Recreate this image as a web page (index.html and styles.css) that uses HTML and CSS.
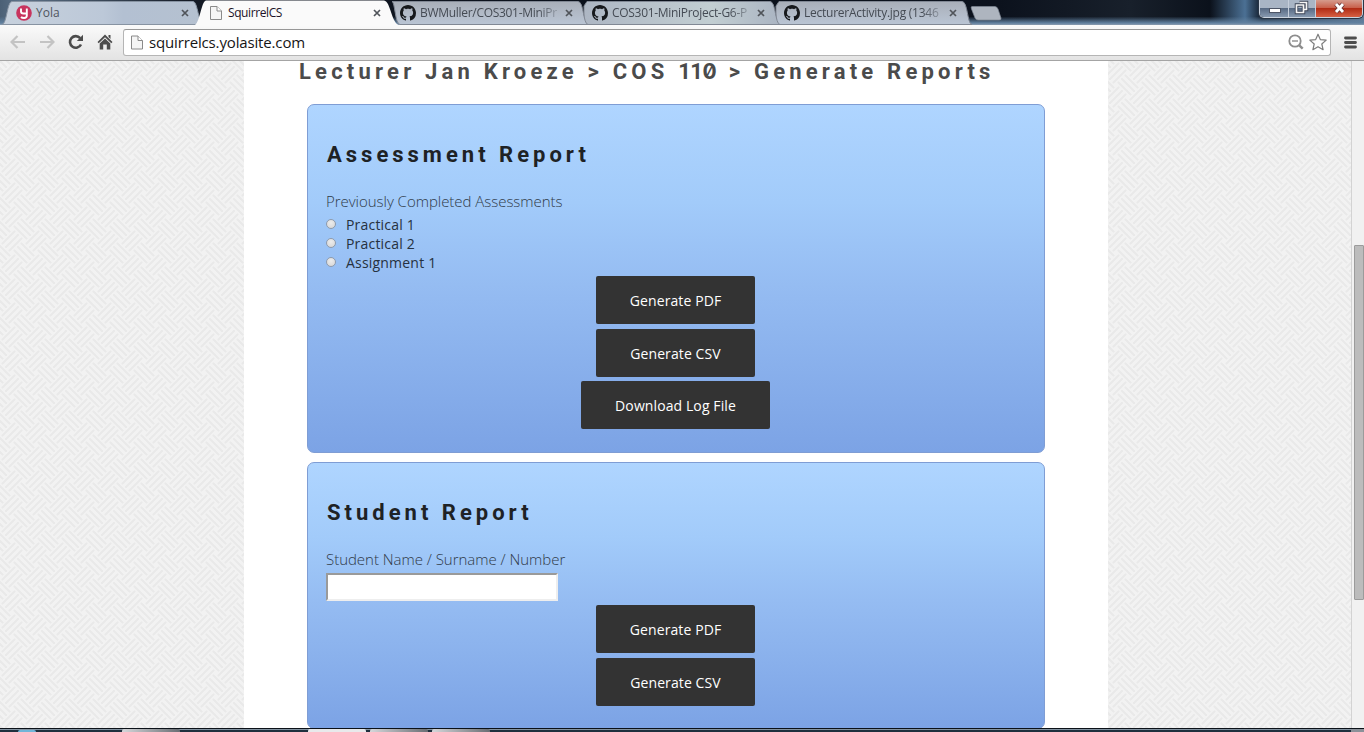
FILE: index.html
```html
<!DOCTYPE html>
<html lang="en">
<head>
<meta charset="utf-8">
<title>SquirrelCS</title>
<link rel="stylesheet" href="styles.css">
</head>
<body>
<svg class="defs" width="0" height="0" aria-hidden="true">
  <defs>
    <linearGradient id="glass" x1="0" y1="0" x2="0" y2="1"><stop offset="0" stop-color="#a9afb9"/><stop offset="1" stop-color="#bac5d4"/></linearGradient>
    <linearGradient id="glassLight" x1="0" y1="0" x2="1" y2="0"><stop offset="0" stop-color="#c7d1dd"/><stop offset=".5" stop-color="#bcc8d8"/><stop offset=".6" stop-color="#b3c0d2"/><stop offset="1" stop-color="#b5c1d0"/></linearGradient>
    <linearGradient id="glow" x1="0" y1="0" x2="1" y2="0"><stop offset="0" stop-color="#adb6c3"/><stop offset=".65" stop-color="#c2ced2"/><stop offset="1" stop-color="#aab4c2"/></linearGradient>
    <symbol id="page" viewBox="0 0 12 14"><path d="M.5 .5H7L11.5 5V13.5H.5Z" fill="#f5f5f5" stroke="#8a8a8a"/><path d="M7 .5V5H11.5" fill="#fff" stroke="#8a8a8a"/></symbol>
    <symbol id="github" viewBox="0 0 16 16"><path fill="#17191c" d="M8 0C3.58 0 0 3.58 0 8c0 3.54 2.29 6.53 5.47 7.59.4.07.55-.17.55-.38 0-.19-.01-.82-.01-1.49-2.01.37-2.53-.49-2.69-.94-.09-.23-.48-.94-.82-1.13-.28-.15-.68-.52-.01-.53.63-.01 1.08.58 1.23.82.72 1.21 1.87.87 2.33.66.07-.52.28-.87.51-1.07-1.78-.2-3.64-.89-3.64-3.95 0-.87.31-1.59.82-2.15-.08-.2-.36-1.02.08-2.12 0 0 .67-.21 2.2.82.64-.18 1.32-.27 2-.27s1.36.09 2 .27c1.53-1.04 2.2-.82 2.2-.82.44 1.1.16 1.92.08 2.12.51.56.82 1.27.82 2.15 0 3.07-1.87 3.75-3.65 3.95.29.25.54.73.54 1.48 0 1.07-.01 1.93-.01 2.2 0 .21.15.46.55.38A8.01 8.01 0 0 0 16 8c0-4.42-3.58-8-8-8Z"/></symbol>
    <symbol id="close" viewBox="0 0 8 8"><path d="M1 1L7 7M7 1L1 7" stroke="#50545a" stroke-width="1.7"/></symbol>
  </defs>
</svg>
<div class="window">
  <header class="titlebar">
    <div class="tabs">
      <div class="tab tab-1">
        <svg class="shape" width="204" height="25"><path d="M-1 24.5C4 24 4 1.5 9 1.5H190C195 1.5 195 24 201 24.5Z" fill="url(#glassLight)" stroke="#8793a2"/></svg>
        <svg class="fav" width="16" height="16" viewBox="0 0 16 16"><circle cx="8" cy="8" r="7.8" fill="#c8345e"/><path d="M5 3.5V6.500Q5 8.500 7.500 8.500H10.500M10.800 3.500V10.500Q10.800 13 8 13Q6 13 5 12" fill="none" stroke="#fff" stroke-width="1.900"/></svg>
        <span class="label label-yola">Yola</span><svg class="x" width="8" height="8"><use href="#close"/></svg>
      </div>
      <div class="tab active">
        <svg class="shape" width="208" height="26"><path d="M-1 25.5C5 24 6 1.5 11 .5H189C196 1.5 196 24 205 25.5V26H-1Z" fill="#fafafa" stroke="none"/></svg>
        <svg class="fav" width="16" height="14"><use href="#page" width="12" height="14" x="2"/></svg>
        <span class="label label-squirrel">SquirrelCS</span><svg class="x" width="8" height="8"><use href="#close"/></svg>
      </div>
      <div class="tab tab-3">
        <svg class="shape" width="204" height="25"><path d="M5 1.5H191C197 1.5 196 24 201 24.5H13C8 24 8 1.5 5 1.5Z" fill="url(#glass)" stroke="#818894"/></svg>
        <svg class="fav" width="16" height="16"><use href="#github"/></svg>
        <span class="label fade label-bw">BWMuller/COS301-MiniPr</span><svg class="x" width="8" height="8"><use href="#close"/></svg>
      </div>
      <div class="tab tab-4">
        <svg class="shape" width="204" height="25"><path d="M8 1.5H191C197 1.5 196 24 201 24.5H5V6Z" fill="url(#glow)" stroke="#818894"/></svg>
        <svg class="fav" width="16" height="16"><use href="#github"/></svg>
        <span class="label fade label-cos">COS301-MiniProject-G6-P</span><svg class="x" width="8" height="8"><use href="#close"/></svg>
      </div>
      <div class="tab tab-5">
        <svg class="shape" width="204" height="25"><path d="M8 1.5H191C197 1.5 196 24 201 24.5H5V6Z" fill="url(#glass)" stroke="#818894"/></svg>
        <svg class="fav" width="16" height="16"><use href="#github"/></svg>
        <span class="label fade label-lect">LecturerActivity.jpg (1346</span><svg class="x" width="8" height="8"><use href="#close"/></svg>
      </div>
      <svg class="newtab" width="32" height="15"><path d="M2 .5H25Q27 .5 28 3L31 12Q31.500 14 29 14H8Q6 14 5 12L1.500 3Q.5 .5 2 .5Z" fill="#aeb5bf" stroke="#7e8794" stroke-width=".7"/></svg>
    </div>
    <div class="controls">
      <span class="ctl"><svg width="28" height="17"><rect x="9.500" y="8.500" width="11" height="4" fill="#fff" stroke="#4d5566"/></svg></span>
      <span class="ctl"><svg width="26" height="17"><path d="M10.500 2.500H17.500V9.500H15M7.500 5H14.500V12.500H7.500Z" fill="none" stroke="#3d4557" stroke-width="3.500"/><path d="M10.500 2.500H17.500V9.500H15M7.500 5H14.500V12.500H7.500Z" fill="none" stroke="#f4f4f4" stroke-width="1.700"/></svg></span>
      <span class="ctl ctl-close"><svg width="46" height="17"><path d="M20 4L27 12M27 4L20 12" stroke="#6b3434" stroke-width="4.500"/><path d="M20 4L27 12M27 4L20 12" stroke="#fff" stroke-width="2.800"/></svg></span>
    </div>
  </header>
  <nav class="toolbar">
    <svg class="tool" width="16" height="14" viewBox="0 0 16 14"><path d="M1.500 7H15M7.500 1L1.500 7L7.500 13" fill="none" stroke="#c3c3c3" stroke-width="2.200"/></svg>
    <svg class="tool" width="16" height="14" viewBox="0 0 16 14"><path d="M14.500 7H1M8.500 1L14.500 7L8.500 13" fill="none" stroke="#c3c3c3" stroke-width="2.200"/></svg>
    <svg class="tool" width="16" height="16" viewBox="0 0 16 16"><path d="M13 10.500A5.800 5.800 0 1 1 12.200 4.200" fill="none" stroke="#4c4c4c" stroke-width="2.600"/><path d="M15 .8V7H8.800Z" fill="#4c4c4c"/></svg>
    <svg class="tool" width="16" height="16" viewBox="0 0 16 16"><path d="M8 .5L15.500 8L14.300 9.200L8 3.300L1.700 9.200L.5 8ZM11.500 1H13.500V5L11.500 3ZM8 4.500L13.300 9.500V15.500H9.800V10.500H6.200V15.500H2.700V9.500Z" fill="#4c4c4c"/></svg>
    <div class="address">
      <svg width="12" height="15"><use href="#page" width="12" height="15"/></svg>
      <span class="url">squirrelcs.yolasite.com</span>
      <svg class="zoomout" width="16" height="16" viewBox="0 0 16 16"><circle cx="7" cy="7" r="5.700" fill="none" stroke="#8d8d8d" stroke-width="1.800"/><path d="M4 7H10" stroke="#8d8d8d" stroke-width="1.400"/><path d="M11.300 11.300L14.700 14.700" stroke="#8d8d8d" stroke-width="2.400"/></svg>
      <svg width="18" height="18" viewBox="0 0 18 18"><path d="M9 1.200L11.300 6.600L17.200 7.100L12.800 11L14.100 16.700L9 13.700L3.900 16.700L5.200 11L.8 7.100L6.700 6.600Z" fill="#fff" stroke="#7d7d7d" stroke-width="1.200" stroke-linejoin="round"/></svg>
    </div>
    <svg class="menu" width="13" height="13"><path d="M1.500 2H11.500M1.500 6.500H11.500M1.500 11H11.500" stroke="#4c4c4c" stroke-width="2.800" stroke-linecap="round"/></svg>
  </nav>
  <main class="viewport">
    <div class="page">
      <h1 class="crumbs">Lecturer Jan Kroeze &gt; COS <span class="ones">11</span><span class="zero">0</span> &gt; Generate Reports</h1>
      <section class="panel panel-assessment">
        <h2 class="heading h-assess">Assessment Report</h2>
        <p class="caption">Previously Completed Assessments</p>
        <div class="choices">
          <label class="choice"><span class="radio"></span>Practical 1</label>
          <label class="choice"><span class="radio"></span>Practical 2</label>
          <label class="choice"><span class="radio"></span>Assignment 1</label>
        </div>
        <div class="buttons">
          <button class="btn">Generate PDF</button>
          <button class="btn">Generate CSV</button>
          <button class="btn wide">Download Log File</button>
        </div>
      </section>
      <section class="panel panel-student">
        <h2 class="heading h-student">Student Report</h2>
        <p class="caption caption-student">Student Name / Surname / Number</p>
        <input class="field" type="text">
        <div class="buttons">
          <button class="btn">Generate PDF</button>
          <button class="btn">Generate CSV</button>
        </div>
      </section>
    </div>
    <div class="scrollbar"><div class="thumb"></div></div>
  </main>
  <footer class="taskbar">
    <span class="orb"></span><span class="task t1"></span><span class="task t2"></span><span class="task t3"></span><span class="task t4"></span><span class="show-desktop"></span>
  </footer>
</div>
</body>
</html>
```
FILE: styles.css
```css
* { box-sizing: border-box; }
body { margin: 0; font-family: "Open Sans", sans-serif; overflow: hidden; }
.defs { position: absolute; }
svg { display: block; flex: none; }
.window { width: 1364px; height: 732px; display: flex; flex-direction: column; overflow: hidden; }

.titlebar { height: 25px; flex: none; display: flex; justify-content: space-between; align-items: flex-start; background: linear-gradient(180deg, transparent 66%, #60809f 92%, #8c9db0 100%), linear-gradient(90deg, #4b6076 0, #5d7288 20px, #141a25 190px, #090f1a 600px, #0c121d 1000px, #18202b 1130px, #0b111b 1210px, #4b7094 1245px, #101a28 1262px, #5f7894 1364px); }
.tabs { display: flex; padding-left: 3px; height: 25px; }
.tab { width: 192px; height: 25px; position: relative; display: flex; align-items: center; padding-left: 13px; }
.tab-1 { z-index: 5; }
.active { z-index: 9; }
.tab-3 { z-index: 4; }
.tab-4 { z-index: 3; }
.tab-5 { z-index: 2; }
.shape { position: absolute; left: 0; top: 0; overflow: visible; }
.fav, .label, .x { position: relative; }
.label { width: 140px; margin-left: 4px; font-size: 12px; line-height: 24px; color: #50565f; white-space: nowrap; }
.active .label { color: #1c1328; }
.fade { color: #454b54; -webkit-mask-image: linear-gradient(90deg, #000 118px, transparent 144px); mask-image: linear-gradient(90deg, #000 118px, transparent 144px); }
.label-squirrel { letter-spacing: -.4px; }
.label-bw { letter-spacing: -.3px; }
.label-cos { letter-spacing: -.3px; }
.label-lect { letter-spacing: -.25px; }
.x { margin-left: 5px; }
.newtab { margin: 6px 0 0 7px; }
.controls { display: flex; margin-right: 1px; height: 18px; border: 1px solid #cbd4df; border-top: 0; border-radius: 0 0 5px 5px; overflow: hidden; box-shadow: 0 0 0 1px #293545; }
.ctl { background: linear-gradient(#a9b5c5 0 45%, #596b84 50%, #8799b0); border-right: 1px solid #c5cedb; }
.ctl-close { background: linear-gradient(#d59b8d 0, #c9614c 45%, #b12c15 50%, #d76043); border: 0; }

.toolbar { height: 36px; flex: none; display: flex; align-items: center; padding: 0 7px 1px 10px; background: linear-gradient(#fafafa, #e3e3e3); border-bottom: 1px solid #a4a4a4; }
.tool { margin-right: 13px; }
.tool:nth-child(4) { margin-right: 10px; }
.address { flex: 1; height: 27px; display: flex; align-items: center; padding: 0 3px 0 7px; border: 1px solid #b5b5b5; border-top-color: #979797; border-radius: 3px; background: #fff; }
.url { flex: 1; margin-left: 6px; font-size: 15px; letter-spacing: -.15px; line-height: 24px; color: #151515; }
.zoomout { margin-right: 5px; }
.menu { margin-left: 13px; }

.viewport { height: 667px; flex: none; display: flex; padding-left: 244px; overflow: hidden; background: #f2f2f2 url("data:image/svg+xml,%3Csvg xmlns='http://www.w3.org/2000/svg' width='24' height='24'%3E%3Cdefs%3E%3Cpath id='b' d='M-6-6L6 6M-2.500-9.500L9.500 2.500M-9.500-2.500L2.500 9.500'/%3E%3C/defs%3E%3Cg fill='none' stroke='%23e9e9e9' stroke-width='2.200' stroke-linecap='round'%3E%3Cpath d='M6 18L18 6M2.500 14.500L14.500 2.500M9.500 21.500L21.500 9.500'/%3E%3Cuse href='%23b'/%3E%3Cuse href='%23b' x='24'/%3E%3Cuse href='%23b' y='24'/%3E%3Cuse href='%23b' x='24' y='24'/%3E%3C/g%3E%3C/svg%3E"); }
.page { width: 864px; height: 667px; padding: 0 63px; background: #fff; }
.crumbs { margin: 0 0 0 -8px; height: 43px; font: 700 22px/22px Roboto, sans-serif; letter-spacing: 4.200px; color: #4b4b4b; white-space: nowrap; }
.ones { letter-spacing: -.5px; }
.zero { font-family: Inter, sans-serif; font-feature-settings: "zero"; font-size: 21px; letter-spacing: 2.500px; line-height: 20px; }
.panel { width: 738px; border: 1px solid #7f9dd4; border-radius: 7px; padding: 38px 19px 0 18px; background: linear-gradient(#afd5ff 0, #a2cbfa 28%, #95bcf2 52%, #7ca3e5 100%); }
.panel-assessment { height: 349px; margin-bottom: 9px; }
.panel-student { height: 267px; }
.heading { margin: 0; padding-left: 1px; font: 700 22px/24px Roboto, sans-serif; letter-spacing: 4px; color: #1e2225; }
.caption { margin: 24px 0 0; font-size: 15px; font-weight: 300; line-height: 20px; letter-spacing: -.03px; color: #303a47; }
.choices { margin-top: 4px; }
.choice { display: flex; align-items: center; height: 19px; font-size: 14px; letter-spacing: .2px; color: #263140; }
.radio { width: 10px; height: 10px; margin: 0 10px 1px 0; border-radius: 50%; border: 1px solid #8f9bac; background: radial-gradient(circle at 50% 35%, #ececec, #d4d4d4); }
.buttons { display: flex; flex-direction: column; align-items: center; gap: 5px; }
.choices + .buttons { padding-top: 4px; }
.btn { width: 159px; height: 48px; padding: 0; border: 0; border-radius: 2px; background: #333; color: #fff; font: 14px "Open Sans", sans-serif; letter-spacing: .1px; }
.wide { width: 189px; margin-top: -1px; }
.field { display: block; width: 232px; height: 28px; margin: 4px 0; border: 2px inset #eee; background: #fff; }

.scrollbar { width: 13px; height: 667px; margin-left: auto; padding: 184px 0 0 2px; background: #f1f1f1; border-left: 1px solid #d3d3d3; }
.thumb { width: 10px; height: 355px; background: #bcbcbc; border: 1px solid #9b9b9b; border-radius: 1px; }

.taskbar { height: 4px; flex: none; display: flex; background: linear-gradient(#0b1118 0 1px, #8494a2 1px 2px, #1f303e 2px); }
.orb { width: 18px; height: 2px; margin: 2px 0 0 18px; background: #71b5d8; border-radius: 8px 8px 0 0; }
.task { height: 3px; margin-top: 1px; width: 58px; border-radius: 2px 2px 0 0; background: linear-gradient(90deg, #d5d7da, #696e74); }
.t1 { margin-left: 86px; }
.t2 { margin-left: 128px; background: #e8e9eb; }
.t3, .t4 { margin-left: 4px; }
.show-desktop { width: 13px; height: 3px; margin: 1px 0 0 auto; background: #8b9199; }
```
